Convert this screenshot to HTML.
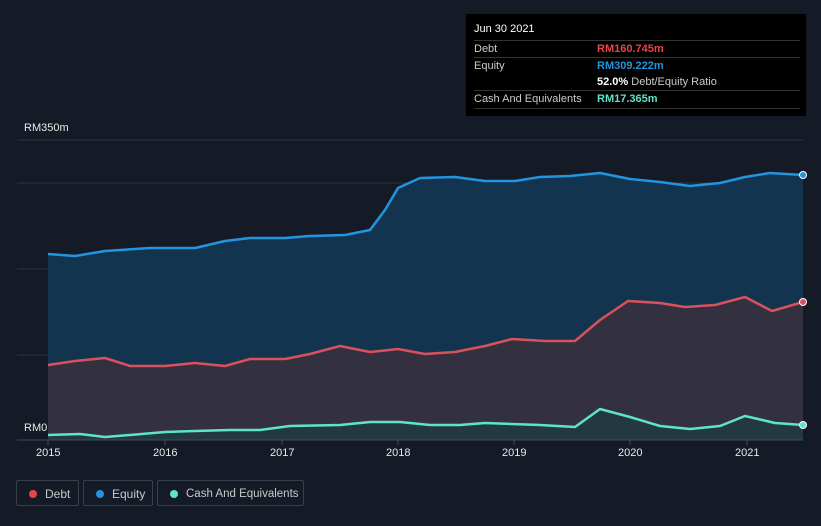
<!DOCTYPE html>
<html><head><style>
body{margin:0;width:821px;height:526px;background:#151b26;font-family:"Liberation Sans",sans-serif;overflow:hidden;position:relative}
.tt{position:absolute;left:466px;top:14px;width:340px;height:102px;background:#000;color:#ccc;font-size:11px}
.r{position:absolute;left:8px;right:6px;border-top:1px solid #333;height:17px;line-height:17px}
.lg{position:absolute;top:480px;height:26px;border:1px solid #3a404b;border-radius:2px;color:#c8c8c8;font-size:12px;line-height:26px;box-sizing:border-box;white-space:nowrap}
.lg i{position:absolute;left:12px;top:9px;width:8px;height:8px;border-radius:50%}
.ax{position:absolute;color:#e8e8e8;font-size:11px}
</style></head><body>
<svg width="821" height="526" style="position:absolute;left:0;top:0">
<line x1="17" y1="140" x2="803" y2="140" stroke="#2e3440"/>
<line x1="17" y1="183" x2="803" y2="183" stroke="#2e3440"/>
<line x1="17" y1="269" x2="803" y2="269" stroke="#2e3440"/>
<line x1="17" y1="355" x2="803" y2="355" stroke="#2e3440"/>
<polygon fill="#13344f" points="48,440 48,254 75,256 105,251 150,248 195,248 225,241 250,238 285,238 310,236 345,235 370,230 385,210 398,188 420,178 455,177 485,181 515,181 540,177 570,176 600,173 630,179 660,182 690,186 720,183 745,177 770,173 803,175 803,440"/>
<polygon fill="#33303f" points="48,440 48,365 75,361 105,358 130,366 165,366 195,363 225,366 250,359 285,359 310,354 340,346 370,352 398,349 425,354 455,352 485,346 512,339 545,341 575,341 600,320 628,301 660,303 685,307 715,305 745,297 772,311 803,302 803,440"/>
<polygon fill="#24383f" points="48,440 48,435 80,434 105,437 130,435 165,432 195,431 230,430 260,430 290,426 340,425 370,422 400,422 430,425 460,425 485,423 540,425 575,427 600,409 630,417 660,426 690,429 720,426 745,416 775,423 803,425 803,440"/>
<polyline fill="none" stroke="#2394df" stroke-width="2.5" stroke-linejoin="round" points="48,254 75,256 105,251 150,248 195,248 225,241 250,238 285,238 310,236 345,235 370,230 385,210 398,188 420,178 455,177 485,181 515,181 540,177 570,176 600,173 630,179 660,182 690,186 720,183 745,177 770,173 803,175"/>
<polyline fill="none" stroke="#d9515c" stroke-width="2.5" stroke-linejoin="round" points="48,365 75,361 105,358 130,366 165,366 195,363 225,366 250,359 285,359 310,354 340,346 370,352 398,349 425,354 455,352 485,346 512,339 545,341 575,341 600,320 628,301 660,303 685,307 715,305 745,297 772,311 803,302"/>
<polyline fill="none" stroke="#5ee3cc" stroke-width="2.5" stroke-linejoin="round" points="48,435 80,434 105,437 130,435 165,432 195,431 230,430 260,430 290,426 340,425 370,422 400,422 430,425 460,425 485,423 540,425 575,427 600,409 630,417 660,426 690,429 720,426 745,416 775,423 803,425"/>
<line x1="17" y1="440" x2="803" y2="440" stroke="#444a55"/>
<g stroke="#444a55"><line x1="48" y1="440" x2="48" y2="445"/><line x1="165" y1="440" x2="165" y2="445"/><line x1="282" y1="440" x2="282" y2="445"/><line x1="398" y1="440" x2="398" y2="445"/><line x1="514" y1="440" x2="514" y2="445"/><line x1="630" y1="440" x2="630" y2="445"/><line x1="747" y1="440" x2="747" y2="445"/></g>
<circle cx="803" cy="175" r="3.5" fill="#2394df" stroke="#fff" stroke-width="1"/>
<circle cx="803" cy="302" r="3.5" fill="#d9515c" stroke="#fff" stroke-width="1"/>
<circle cx="803" cy="425" r="3.5" fill="#5ee3cc" stroke="#fff" stroke-width="1"/>
</svg>
<div class="ax" style="left:24px;top:122px">RM350m</div>
<div class="ax" style="left:24px;top:422px">RM0</div>
<div class="ax" style="left:36px;top:447px">2015</div>
<div class="ax" style="left:153px;top:447px">2016</div>
<div class="ax" style="left:270px;top:447px">2017</div>
<div class="ax" style="left:386px;top:447px">2018</div>
<div class="ax" style="left:502px;top:447px">2019</div>
<div class="ax" style="left:618px;top:447px">2020</div>
<div class="ax" style="left:735px;top:447px">2021</div>
<div class="tt">
<div style="position:absolute;left:8px;top:9px;color:#fff">Jun 30 2021</div>
<div class="r" style="top:26px">Debt<span style="position:absolute;left:123px;color:#e8444b;font-weight:bold">RM160.745m</span></div>
<div class="r" style="top:43px">Equity<span style="position:absolute;left:123px;color:#2394df;font-weight:bold">RM309.222m</span></div>
<div style="position:absolute;left:131px;top:60px;line-height:17px"><b style="color:#fff">52.0%</b> Debt/Equity Ratio</div>
<div class="r" style="top:76px;border-bottom:1px solid #333">Cash And Equivalents<span style="position:absolute;left:123px;color:#5ee3cc;font-weight:bold">RM17.365m</span></div>
</div>
<div class="lg" style="left:16px;width:63px"><i style="background:#e8444b"></i><span style="padding-left:28px">Debt</span></div>
<div class="lg" style="left:83px;width:70px"><i style="background:#2394df"></i><span style="padding-left:28px">Equity</span></div>
<div class="lg" style="left:157px;width:147px;font-size:11.5px"><i style="background:#5ee3cc"></i><span style="padding-left:28px">Cash And Equivalents</span></div>
</body></html>
